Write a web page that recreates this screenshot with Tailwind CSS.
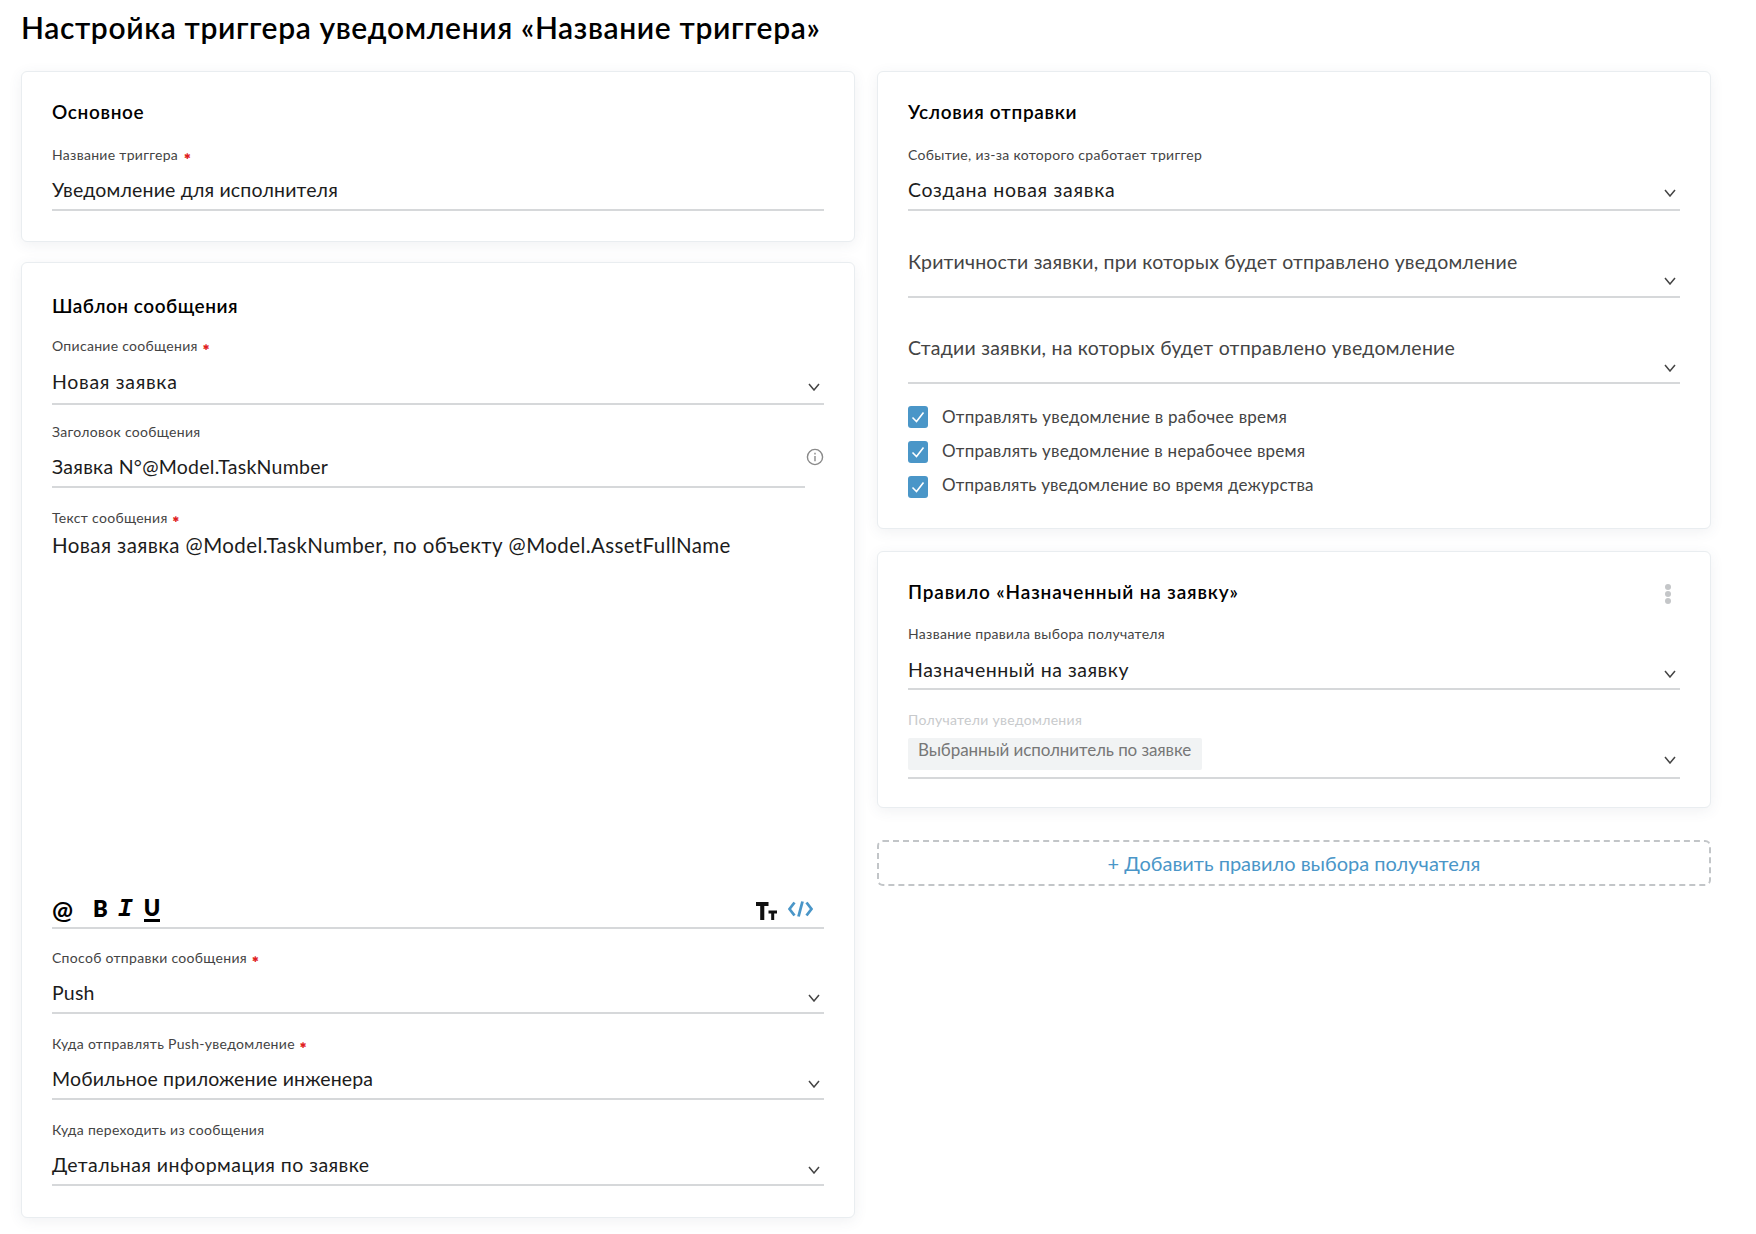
<!DOCTYPE html>
<html lang="ru">
<head>
  <meta charset="UTF-8" />
  <title>Настройка триггера уведомления</title>
  <script src="https://cdn.jsdelivr.net/npm/@tailwindcss/browser@4"></script>
</head>
<body class="bg-white font-['Lato','Open_Sans',sans-serif] text-[#1c1c1c] w-[1756px] h-[1234px] overflow-hidden">
  <div class="pl-[21px]">
    <h1 class="h-[71px] pt-[10px] text-[30px] leading-[34px] font-semibold text-black tracking-[0.62px]">Настройка триггера уведомления «Название триггера»</h1>

    <div class="flex gap-[22px] items-start">
      <!-- левая колонка -->
      <div class="w-[834px] flex flex-col gap-[20px]">
        <section class="rounded-md border border-[#e9edf0] bg-white shadow-[0_3px_14px_rgba(60,80,100,0.08)] px-[30px] pt-[28px] pb-[30px]">
          <h2 class="h-6 leading-6 text-[19px] font-semibold tracking-[0.65px] text-black mb-[21px]">Основное</h2>
          <div>
            <div class="h-5 leading-5 text-[14px] tracking-[0.3px] text-[#444]">Название триггера <span class="ml-[2px] align-[1px] font-['DejaVu_Sans'] text-[8px] text-[#e02020]">✱</span></div>
            <div class="h-[46px] border-b-2 border-[#d6d8da] pt-[11px] text-[19.5px] tracking-[0.17px] leading-7">Уведомление для исполнителя</div>
          </div>
        </section>

        <section class="rounded-md border border-[#e9edf0] bg-white shadow-[0_3px_14px_rgba(60,80,100,0.08)] px-[30px] pt-[31px] pb-[31px]">
          <h2 class="h-6 leading-6 text-[19px] font-semibold tracking-[0.5px] text-black mb-[18px]">Шаблон сообщения</h2>

          <div>
            <div class="h-5 leading-5 text-[14px] tracking-[0.3px] text-[#444]">Описание сообщения <span class="ml-[1px] align-[1px] font-['DejaVu_Sans'] text-[8px] text-[#e02020]">✱</span></div>
            <div class="h-[49px] border-b-2 border-[#d6d8da] pt-[12px] flex justify-between text-[19.5px] leading-7">
              <span class="tracking-[0.7px]">Новая заявка</span>
              <svg class="mt-[15px] mr-[4px]" width="12" height="8" viewBox="0 0 12 8" fill="none" stroke="#444" stroke-width="1.5"><path d="M1 1l5 6 5-6"/></svg>
            </div>
          </div>

          <div class="mt-[17px] flex">
            <div class="w-[754px]">
              <div class="h-5 leading-5 text-[14px] tracking-[0.3px] text-[#444]">Заголовок сообщения</div>
              <div class="h-[46px] border-b-2 border-[#d6d8da] pt-[11px] text-[19.5px] tracking-[0.26px] leading-7">Заявка N°@Model.TaskNumber</div>
            </div>
            <svg class="ml-[1px] mt-[26px]" width="18" height="18" viewBox="0 0 18 18" fill="none" stroke="#8a8a8a" stroke-width="1.4"><circle cx="9" cy="9" r="7.6"/><path d="M9 8v5.2M9 4.8v1.6"/></svg>
          </div>

          <div class="mt-[20px] h-[421px] flex flex-col border-b-2 border-[#d6d8da]">
            <div class="h-5 leading-5 text-[14px] tracking-[0.3px] text-[#444]">Текст сообщения <span class="ml-[1px] align-[1px] font-['DejaVu_Sans'] text-[8px] text-[#e02020]">✱</span></div>
            <div class="text-[20.5px] tracking-[0.4px] leading-[34px]">Новая заявка @Model.TaskNumber, по объекту @Model.AssetFullName</div>
            <div class="mt-auto h-[32px] mb-[2px] flex items-center text-black">
              <span class="w-[20px] text-[25px] font-bold leading-none">@</span>
              <span class="ml-[21px] text-[22px] font-extrabold leading-none">B</span>
              <span class="ml-[10px] font-['Liberation_Mono'] italic text-[25px] font-bold leading-none">I</span>
              <span class="ml-[11px] text-[22px] font-extrabold leading-[22px] border-b-[3px] border-black">U</span>
              <svg class="ml-auto mt-[3px]" width="21" height="18" viewBox="0 0 21 18" fill="#111"><path d="M0 0h12.5v4H8.3v14H4.2V4H0zM12.5 8.5H21v3h-2.8V18h-3v-6.5h-2.7z"/></svg>
              <svg class="ml-[11px] mr-[11px]" width="25" height="16" viewBox="0 0 25 16" fill="none" stroke="#4a96c8" stroke-width="2.8"><path d="M6.5 1.5L1.5 8l5 6.5M18.5 1.5l5 6.5-5 6.5M14.5.5l-4 15"/></svg>
            </div>
          </div>

          <div class="mt-[19px]">
            <div class="h-5 leading-5 text-[14px] tracking-[0.3px] text-[#444]">Способ отправки сообщения <span class="ml-[1px] align-[1px] font-['DejaVu_Sans'] text-[8px] text-[#e02020]">✱</span></div>
            <div class="h-[46px] border-b-2 border-[#d6d8da] pt-[11px] flex justify-between text-[19.5px] leading-7">
              <span class="tracking-[0.2px]">Push</span>
              <svg class="mt-[15px] mr-[4px]" width="12" height="8" viewBox="0 0 12 8" fill="none" stroke="#444" stroke-width="1.5"><path d="M1 1l5 6 5-6"/></svg>
            </div>
          </div>

          <div class="mt-[20px]">
            <div class="h-5 leading-5 text-[14px] tracking-[0.3px] text-[#444]">Куда отправлять Push-уведомление <span class="ml-[1px] align-[1px] font-['DejaVu_Sans'] text-[8px] text-[#e02020]">✱</span></div>
            <div class="h-[46px] border-b-2 border-[#d6d8da] pt-[11px] flex justify-between text-[19.5px] leading-7">
              <span class="tracking-[0.15px]">Мобильное приложение инженера</span>
              <svg class="mt-[15px] mr-[4px]" width="12" height="8" viewBox="0 0 12 8" fill="none" stroke="#444" stroke-width="1.5"><path d="M1 1l5 6 5-6"/></svg>
            </div>
          </div>

          <div class="mt-[20px]">
            <div class="h-5 leading-5 text-[14px] tracking-[0.3px] text-[#444]">Куда переходить из сообщения</div>
            <div class="h-[46px] border-b-2 border-[#d6d8da] pt-[11px] flex justify-between text-[19.5px] leading-7">
              <span class="tracking-[0.45px]">Детальная информация по заявке</span>
              <svg class="mt-[15px] mr-[4px]" width="12" height="8" viewBox="0 0 12 8" fill="none" stroke="#444" stroke-width="1.5"><path d="M1 1l5 6 5-6"/></svg>
            </div>
          </div>
        </section>
      </div>

      <!-- правая колонка -->
      <div class="w-[834px] flex flex-col gap-[22px]">
        <section class="rounded-md border border-[#e9edf0] bg-white shadow-[0_3px_14px_rgba(60,80,100,0.08)] px-[30px] pt-[28px] pb-[30px]">
          <h2 class="h-6 leading-6 text-[19px] font-semibold tracking-[0.7px] text-black mb-[21px]">Условия отправки</h2>
          <div>
            <div class="h-5 leading-5 text-[14px] tracking-[0.3px] text-[#444]">Событие, из-за которого сработает триггер</div>
            <div class="h-[46px] border-b-2 border-[#d6d8da] pt-[11px] flex justify-between text-[19.5px] leading-7">
              <span class="tracking-[0.7px]">Создана новая заявка</span>
              <svg class="mt-[13px] mr-[4px]" width="12" height="8" viewBox="0 0 12 8" fill="none" stroke="#444" stroke-width="1.5"><path d="M1 1l5 6 5-6"/></svg>
            </div>
          </div>
          <div class="h-[87px] border-b-2 border-[#d6d8da] pt-[37px] flex justify-between text-[19.5px] leading-7 text-[#444]">
            <span class="tracking-[0.17px]">Критичности заявки, при которых будет отправлено уведомление</span>
            <svg class="mt-[29px] mr-[4px]" width="12" height="8" viewBox="0 0 12 8" fill="none" stroke="#444" stroke-width="1.5"><path d="M1 1l5 6 5-6"/></svg>
          </div>
          <div class="h-[86px] border-b-2 border-[#d6d8da] pt-[36px] flex justify-between text-[19.5px] leading-7 text-[#444]">
            <span class="tracking-[0.23px]">Стадии заявки, на которых будет отправлено уведомление</span>
            <svg class="mt-[30px] mr-[4px]" width="12" height="8" viewBox="0 0 12 8" fill="none" stroke="#444" stroke-width="1.5"><path d="M1 1l5 6 5-6"/></svg>
          </div>
          <div class="mt-[22px] flex flex-col gap-[13px] text-[17px] text-[#444]">
            <label class="flex items-center gap-[14px] h-[22px]">
              <span class="w-5 h-[22px] rounded-[3px] bg-[#4a96c8] flex items-center justify-center"><svg width="14" height="12" viewBox="0 0 14 12" fill="none" stroke="#fff" stroke-width="1.6"><path d="M1.5 6.5l4 4 7-9"/></svg></span>
              <span class="tracking-[0.24px]">Отправлять уведомление в рабочее время</span>
            </label>
            <label class="flex items-center gap-[14px] h-[22px]">
              <span class="w-5 h-[22px] rounded-[3px] bg-[#4a96c8] flex items-center justify-center"><svg width="14" height="12" viewBox="0 0 14 12" fill="none" stroke="#fff" stroke-width="1.6"><path d="M1.5 6.5l4 4 7-9"/></svg></span>
              <span class="-mt-[2px] tracking-[0.22px]">Отправлять уведомление в нерабочее время</span>
            </label>
            <label class="flex items-center gap-[14px] h-[22px]">
              <span class="w-5 h-[22px] rounded-[3px] bg-[#4a96c8] flex items-center justify-center"><svg width="14" height="12" viewBox="0 0 14 12" fill="none" stroke="#fff" stroke-width="1.6"><path d="M1.5 6.5l4 4 7-9"/></svg></span>
              <span class="-mt-[4px] tracking-[0.14px]">Отправлять уведомление во время дежурства</span>
            </label>
          </div>
        </section>

        <section class="rounded-md border border-[#e9edf0] bg-white shadow-[0_3px_14px_rgba(60,80,100,0.08)] px-[30px] pt-[28px] pb-[28px]">
          <div class="h-6 mb-[20px] flex justify-between">
            <h2 class="leading-6 text-[19px] font-semibold tracking-[0.85px] text-black">Правило «Назначенный на заявку»</h2>
            <div class="mr-[9px] mt-[4px] flex flex-col gap-[1px]">
              <span class="w-[6px] h-[6px] rounded-full bg-[#c4c6c8]"></span>
              <span class="w-[6px] h-[6px] rounded-full bg-[#c4c6c8]"></span>
              <span class="w-[6px] h-[6px] rounded-full bg-[#c4c6c8]"></span>
            </div>
          </div>
          <div>
            <div class="h-5 leading-5 text-[14px] tracking-[0.3px] text-[#444]">Название правила выбора получателя</div>
            <div class="h-[46px] border-b-2 border-[#d6d8da] pt-[12px] flex justify-between text-[19.5px] leading-7">
              <span class="tracking-[0.53px]">Назначенный на заявку</span>
              <svg class="mt-[14px] mr-[4px]" width="12" height="8" viewBox="0 0 12 8" fill="none" stroke="#444" stroke-width="1.5"><path d="M1 1l5 6 5-6"/></svg>
            </div>
          </div>
          <div class="mt-[20px]">
            <div class="h-5 leading-5 text-[14px] tracking-[0.3px] text-[#c8cacc]">Получатели уведомления</div>
            <div class="h-[49px] border-b-2 border-[#d6d8da] pt-[8px] flex justify-between items-start">
              <span class="h-[32px] pl-[10px] pr-[11px] bg-[#f1f3f4] rounded-[2px] text-[17px] tracking-[-0.1px] leading-6 text-[#777]">Выбранный исполнитель по заявке</span>
              <svg class="mt-[18px] mr-[4px]" width="12" height="8" viewBox="0 0 12 8" fill="none" stroke="#444" stroke-width="1.5"><path d="M1 1l5 6 5-6"/></svg>
            </div>
          </div>
        </section>

        <button class="mt-[10px] h-[46px] rounded-md border-2 border-dashed border-[#c2c5c8] bg-white text-[20px] text-[#4a96c8]">+ Добавить правило выбора получателя</button>
      </div>
    </div>
  </div>
</body>
</html>
